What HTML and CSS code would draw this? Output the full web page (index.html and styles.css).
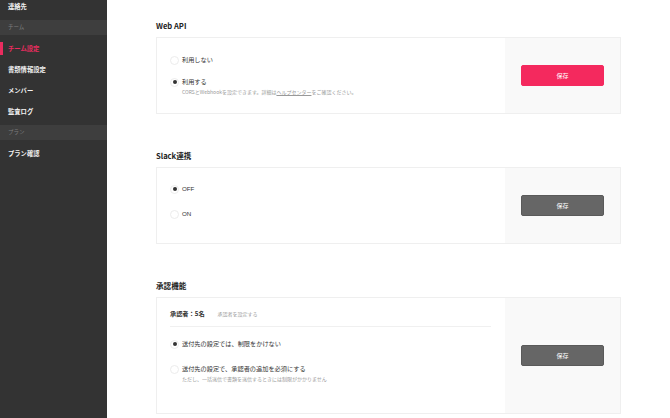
FILE: index.html
```html
<!DOCTYPE html>
<html lang="ja">
<head>
    <meta charset="UTF-8">
    <meta name="viewport" content="width=device-width, initial-scale=1.0">
    <title>チーム設定</title>
    <link rel="stylesheet" href="styles.css">
</head>
<body>
    <nav class="sidebar">
        <a class="nav-item">連絡先</a>
        <div class="nav-group">チーム</div>
        <a class="nav-item active">チーム設定</a>
        <a class="nav-item">書類情報設定</a>
        <a class="nav-item">メンバー</a>
        <a class="nav-item">監査ログ</a>
        <div class="nav-group">プラン</div>
        <a class="nav-item">プラン確認</a>
    </nav>

    <main class="main">
        <section class="section">
            <h2>Web API</h2>
            <div class="card">
                <div class="card-body">
                    <div class="options tight">
                        <label class="option">
                            <span class="radio"></span>
                            <span class="option-text">利用しない</span>
                        </label>
                        <label class="option">
                            <span class="radio checked"></span>
                            <span class="option-text">
                                利用する
                                <small class="hint">CORSとWebhookを設定できます。詳細は<u>ヘルプセンター</u>をご確認ください。</small>
                            </span>
                        </label>
                    </div>
                </div>
                <div class="card-side">
                    <button class="btn btn-primary">保存</button>
                </div>
            </div>
        </section>

        <section class="section">
            <h2>Slack連携</h2>
            <div class="card">
                <div class="card-body">
                    <div class="options">
                        <label class="option">
                            <span class="radio checked"></span>
                            <span class="option-text latin">OFF</span>
                        </label>
                        <label class="option">
                            <span class="radio"></span>
                            <span class="option-text latin">ON</span>
                        </label>
                    </div>
                </div>
                <div class="card-side">
                    <button class="btn">保存</button>
                </div>
            </div>
        </section>

        <section class="section">
            <h2>承認機能</h2>
            <div class="card card-tall">
                <div class="card-body card-body-top">
                    <div class="approver">
                        <strong>承認者：5名</strong>
                        <a class="approver-link">承認者を設定する</a>
                    </div>
                    <div class="options">
                        <label class="option">
                            <span class="radio checked"></span>
                            <span class="option-text">送付先の設定では、制限をかけない</span>
                        </label>
                        <label class="option">
                            <span class="radio"></span>
                            <span class="option-text">
                                送付先の設定で、承認者の追加を必須にする
                                <small class="hint">ただし、一括送信で書類を送信するときには制限がかかりません</small>
                            </span>
                        </label>
                    </div>
                </div>
                <div class="card-side">
                    <button class="btn">保存</button>
                </div>
            </div>
        </section>
    </main>
</body>
</html>
```

FILE: styles.css
```css
* {
    box-sizing: border-box;
}

body {
    margin: 0;
    display: flex;
    height: 100vh;
    overflow: hidden;
    font-family: "Noto Sans CJK JP", "Noto Sans", sans-serif;
    color: #333;
    background: #fff;
}

.sidebar {
    width: 107px;
    flex-shrink: 0;
    background: #333;
}

.nav-item {
    display: block;
    position: relative;
    height: 21px;
    line-height: 21px;
    padding-left: 8px;
    font-size: 6.3px;
    font-weight: bold;
    color: #f2f2f2;
}

.nav-item:first-child {
    margin-top: -4px;
}

.nav-item.active {
    color: #ea2c5f;
}

.nav-item.active::before {
    content: "";
    position: absolute;
    left: 0;
    top: 4px;
    width: 3px;
    height: 13px;
    background: #ea2c5f;
}

.nav-group {
    height: 15px;
    line-height: 15px;
    margin: 3px 0;
    padding-left: 8px;
    background: #3e3e3e;
    font-size: 5.5px;
    color: #7d7d7d;
}

.main {
    flex: 1;
    padding: 20px 49px 0;
}

.section {
    margin-bottom: 36px;
}

.section h2 {
    margin: 0 0 5px;
    font-size: 7.6px;
    line-height: 12px;
    font-weight: bold;
    color: #222;
}

.card {
    display: flex;
    min-height: 77px;
    border: 1px solid #efefef;
}

.card-tall {
    min-height: 117px;
}

.card-body {
    flex: 1;
    padding: 16px 13px;
}

.card-body-top {
    padding-top: 11px;
}

.card-side {
    width: 115px;
    display: flex;
    align-items: center;
    justify-content: center;
    background: #f9f9f9;
}

.options {
    display: flex;
    flex-direction: column;
    gap: 15px;
}

.options.tight {
    gap: 12px;
    padding-top: 1px;
}

.option {
    display: flex;
    align-items: flex-start;
    gap: 3px;
}

.radio {
    width: 9px;
    height: 9px;
    margin-top: 0.5px;
    border-radius: 50%;
    border: 1px solid #ececec;
    background: #fff;
    display: flex;
    align-items: center;
    justify-content: center;
}

.radio.checked::after {
    content: "";
    width: 4px;
    height: 4px;
    border-radius: 50%;
    background: #333;
}

.option-text {
    font-size: 6.2px;
    line-height: 10px;
    color: #333;
}

.option-text.latin {
    font-family: "Liberation Sans", sans-serif;
    font-size: 6.2px;
}

.hint {
    display: block;
    margin-top: 1px;
    font-size: 5px;
    line-height: 8px;
    color: #999;
}

.approver {
    display: flex;
    align-items: center;
    gap: 13px;
    width: 321px;
    height: 18px;
    margin-bottom: 12px;
    padding-bottom: 7px;
    border-bottom: 1px solid #f0f0f0;
    line-height: 10px;
}

.approver strong {
    font-size: 6.2px;
    color: #333;
}

.approver-link {
    font-size: 5px;
    color: #999;
}

.btn {
    width: 83px;
    height: 21px;
    border: 1px solid #5a5a5a;
    border-radius: 2px;
    background: #666;
    color: #fff;
    font-family: inherit;
    font-size: 6px;
    cursor: pointer;
}

.btn-primary {
    border-color: #f4295e;
    background: #f4295e;
}
```
